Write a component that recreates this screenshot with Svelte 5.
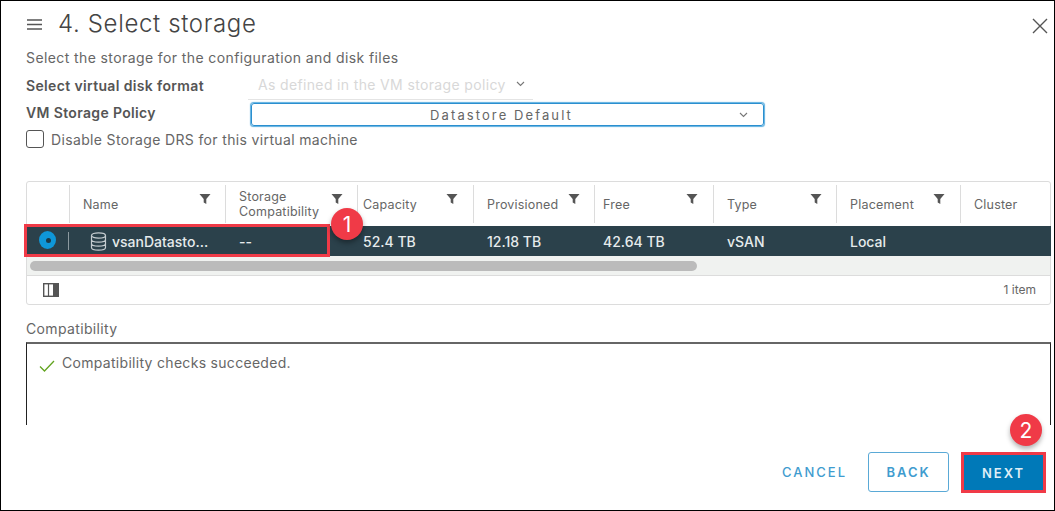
<script>
  // Column definitions for the datastore grid
  const columns = [
    { label: 'Name', width: 156, filter: true, fx: 129 },
    { label: 'Storage Compatibility', width: 132, filter: true, fx: 105 },
    { label: 'Capacity', width: 116, filter: true, fx: 88 },
    { label: 'Provisioned', width: 121, filter: true, fx: 94 },
    { label: 'Free', width: 119, filter: true, fx: 91 },
    { label: 'Type', width: 123, filter: true, fx: 96 },
    { label: 'Placement', width: 124, filter: true, fx: 96 },
    { label: 'Cluster', width: 90, filter: false, fx: 0 }
  ];
  const row = ['', '--', '52.4 TB', '12.18 TB', '42.64 TB', 'vSAN', 'Local', ''];
</script>

<div class="dialog">
  <header class="head">
    <svg class="menu" width="15" height="11" viewBox="0 0 15 11"><path d="M0 1h15M0 5.500h15M0 10h15" stroke="#555" stroke-width="1.500" /></svg>
    <h1>4. Select storage</h1>
    <svg class="close" width="16" height="16" viewBox="0 0 16 16"><path d="M1 1l14 14M15 1L1 15" stroke="#555" stroke-width="1.400" fill="none" /></svg>
  </header>

  <p class="intro">Select the storage for the configuration and disk files</p>

  <div class="field first">
    <span class="label">Select virtual disk format</span>
    <span class="format">
      As defined in the VM storage policy
      <svg width="9" height="6" viewBox="0 0 9 6"><path d="M1 1l3.500 3.500L8 1" stroke="#777" stroke-width="1.100" fill="none" /></svg>
    </span>
  </div>
  <div class="field second">
    <span class="label">VM Storage Policy</span>
    <div class="select">
      <span>Datastore Default</span>
      <svg width="9" height="6" viewBox="0 0 9 6"><path d="M1 1l3.500 3.500L8 1" stroke="#777" stroke-width="1.100" fill="none" /></svg>
    </div>
  </div>
  <label class="check"><span class="box"></span>Disable Storage DRS for this virtual machine</label>

  <div class="grid">
    <div class="grid-head">
      <div class="radio-col"></div>
      {#each columns as col}
        <div class="th" style="width: {col.width}px">
          <span class="th-label">{col.label}</span>
          {#if col.filter}
            <svg class="filter" style="left: {col.fx}px" width="12" height="12" viewBox="0 0 12 12"><path d="M0.500 1h11L7.300 6v5L4.700 9.500V6z" fill="#555" /></svg>
          {/if}
        </div>
      {/each}
    </div>

    <div class="grid-row">
      <div class="radio-col cell-radio"><span class="radio"></span><span class="sep"></span></div>
      <div class="td name" style="width: {columns[0].width}px">
        <svg width="17" height="19" viewBox="0 0 17 19" fill="none" stroke="#c5ccd0" stroke-width="1.200">
          <ellipse cx="8.500" cy="3.500" rx="7" ry="2.600" />
          <path d="M1.500 3.500v12c0 1.500 3.200 2.600 7 2.600s7-1.100 7-2.600v-12M1.500 7.500c0 1.500 3.200 2.600 7 2.600s7-1.100 7-2.600M1.500 11.500c0 1.500 3.200 2.600 7 2.600s7-1.100 7-2.600" />
        </svg>
        <span>vsanDatasto...</span>
      </div>
      {#each row.slice(1) as value, i}
        <div class="td" style="width: {columns[i + 1].width}px">{value}</div>
      {/each}
    </div>

    <div class="scroll"><div class="thumb"></div></div>

    <div class="grid-foot">
      <svg width="16" height="14" viewBox="0 0 16 14"><rect x="0.700" y="0.700" width="14.600" height="12.600" fill="#fff" stroke="#555" stroke-width="1.400" /><path d="M5.500 1v12" stroke="#555" stroke-width="1.200" /><rect x="10" y="1" width="5" height="12" fill="#555" /></svg>
      <span>1 item</span>
    </div>

    <!-- Callout 1 -->
    <div class="mark mark-row"></div>
    <div class="badge badge-one">1</div>
  </div>

  <div class="compat-label">Compatibility</div>
  <div class="compat">
    <svg width="16" height="12" viewBox="0 0 16 12"><path d="M1 6.500l4.500 4.500L15 1" stroke="#62a420" stroke-width="1.300" fill="none" /></svg>
    <span>Compatibility checks succeeded.</span>
  </div>

  <footer class="foot">
    <button class="btn link">CANCEL</button>
    <button class="btn outline">BACK</button>
    <button class="btn primary">NEXT</button>
    <!-- Callout 2 -->
    <div class="badge badge-two">2</div>
  </footer>
</div>

<style>
  :global(body) {
    margin: 0;
    background: #fff;
  }

  .dialog {
    width: 1055px;
    height: 511px;
    box-sizing: border-box;
    border: 1px solid #000;
    padding: 0 3px 0 25px;
    font-family: "Inter", "Open Sans", sans-serif;
    color: #565656;
    overflow: hidden;
    position: relative;
  }

  .head {
    display: flex;
    align-items: center;
    height: 47px;
  }

  .menu {
    margin: 0 16px 0 1px;
  }

  h1 {
    margin: 0 0 2px;
    font-size: 24px;
    font-weight: 300;
    letter-spacing: 0.650px;
    color: #444;
    flex: 1;
  }

  .close {
    margin: 2px 3px 0 0;
  }

  .intro {
    margin: 1px 0 0;
    font-size: 14px;
    letter-spacing: 0.400px;
    line-height: 18px;
    color: #666;
  }

  .field {
    display: flex;
    align-items: center;
    font-size: 14px;
    letter-spacing: 0.350px;
  }

  .first {
    height: 27px;
    margin-top: 6px;
  }

  .second {
    height: 26px;
  }

  .label {
    width: 225px;
    font-weight: 600;
    color: #555;
  }

  .first .label {
    padding-bottom: 3px;
  }

  .second .label {
    padding-bottom: 2px;
  }

  .format {
    width: 285px;
    margin-left: -3px;
    padding: 0 0 4px 10px;
    box-sizing: border-box;
    border-bottom: 1px solid #e4e4e4;
    color: #d8d8d8;
    display: flex;
    align-items: center;
    gap: 10px;
    white-space: nowrap;
    height: 27px;
  }

  .select {
    width: 513px;
    height: 23px;
    margin-top: 3px;
    box-sizing: border-box;
    border: 1px solid #2b8fcf;
    box-shadow: 0 0 1px 0.500px #5cb0e0;
    border-radius: 3px;
    display: flex;
    align-items: center;
    font-size: 13px;
    letter-spacing: 2.100px;
    color: #666;
  }

  .select span {
    flex: 1;
    text-align: center;
    padding-left: 12px;
  }

  .select svg {
    margin-right: 15px;
  }

  .check {
    display: flex;
    align-items: center;
    gap: 7px;
    height: 26px;
    font-size: 14px;
    letter-spacing: 0.350px;
    color: #666;
  }

  .box {
    width: 16px;
    height: 16px;
    border: 1px solid #555;
    border-radius: 3px;
  }

  .grid {
    position: relative;
    margin-top: 29px;
    width: 1025px;
    height: 124px;
    box-sizing: border-box;
    border: 1px solid #dcdcdc;
    border-radius: 3px;
  }

  .grid-head {
    display: flex;
    height: 44px;
    font-size: 12.500px;
    letter-spacing: 0.200px;
    color: #666;
  }

  .radio-col {
    width: 42px;
    flex: none;
  }

  .th {
    position: relative;
    flex: none;
    box-sizing: border-box;
    border-left: 1px solid #dcdcdc;
    margin: 3px 0;
    padding-left: 13px;
    display: flex;
    align-items: center;
    line-height: 15px;
  }

  .th:nth-child(3) {
    padding-left: 13px;
    padding-right: 26px;
  }

  .th:nth-child(4) {
    padding-left: 5px;
  }

  .th:nth-child(5) {
    padding-left: 13px;
  }

  .th:nth-child(6) {
    padding-left: 8px;
  }

  .filter {
    position: absolute;
    top: 8px;
  }

  .grid-row {
    display: flex;
    align-items: center;
    height: 30px;
    background: #2b414b;
    color: #e6ebec;
    font-size: 14px;
    font-weight: 500;
    margin-right: -1px;
  }

  .cell-radio {
    display: flex;
    align-items: center;
    height: 100%;
    position: relative;
  }

  .radio {
    width: 18px;
    height: 18px;
    box-sizing: border-box;
    border-radius: 50%;
    background: #0f97d8;
    margin: -2px 0 0 12px;
    position: relative;
  }

  .radio::after {
    content: "";
    position: absolute;
    left: 6.500px;
    top: 6.500px;
    width: 5px;
    height: 5px;
    border-radius: 50%;
    background: #1c3a48;
  }

  .sep {
    width: 1px;
    height: 18px;
    background: #8c9aa0;
    margin-left: 12px;
  }

  .td {
    flex: none;
    box-sizing: border-box;
    padding-left: 6px;
    white-space: nowrap;
  }

  .td.name {
    display: flex;
    align-items: center;
    gap: 5px;
    padding-left: 21px;
  }

  .td:nth-child(3) {
    padding-left: 14px;
  }

  .td:nth-child(5) {
    padding-left: 14px;
  }

  .td:nth-child(6) {
    padding-left: 9px;
  }

  .td:nth-child(7),
  .td:nth-child(8) {
    padding-left: 14px;
  }

  .scroll {
    height: 20px;
    background: #f0f2f0;
    border-bottom: 1px solid #dcdcdc;
    box-sizing: border-box;
    padding: 5px 0 0 3px;
  }

  .thumb {
    width: 667px;
    height: 10px;
    border-radius: 5px;
    background: #bbb;
  }

  .grid-foot {
    display: flex;
    align-items: center;
    justify-content: space-between;
    height: 27px;
    padding: 0 14px 0 16px;
    font-size: 12px;
    color: #666;
  }

  .mark {
    position: absolute;
    border: 3px solid #f03a47;
    box-sizing: border-box;
  }

  .mark-row {
    left: -3px;
    top: 42px;
    width: 306px;
    height: 33px;
  }

  .badge {
    position: absolute;
    width: 32px;
    height: 32px;
    border-radius: 50%;
    background: #f03a47;
    color: #fff;
    font-size: 21px;
    display: flex;
    align-items: center;
    justify-content: center;
    box-shadow: 0 3px 5px rgba(0, 0, 0, 0.35);
  }

  .badge-one {
    left: 304px;
    top: 26px;
  }

  .compat-label {
    margin-top: 15px;
    font-size: 14px;
    letter-spacing: 0.350px;
    line-height: 18px;
    color: #666;
  }

  .compat {
    width: 1025px;
    height: 83px;
    margin-top: 4px;
    box-sizing: border-box;
    border-top: 2px solid #666;
    border-left: 1px solid #222;
    border-right: 1px solid #222;
    padding: 10px 0 0 12px;
    display: flex;
    align-items: flex-start;
    gap: 7px;
    font-size: 14px;
    letter-spacing: 0.300px;
    line-height: 18px;
    color: #666;
  }

  .compat svg {
    margin-top: 6px;
  }

  .foot {
    position: relative;
    display: flex;
    justify-content: flex-end;
    align-items: flex-start;
    height: 41px;
    margin-top: 27px;
    padding-right: 5px;
  }

  .btn {
    height: 40px;
    box-sizing: border-box;
    font-family: inherit;
    font-size: 13px;
    font-weight: 600;
    letter-spacing: 2px;
    background: none;
    border: none;
    padding: 0;
  }

  .link {
    color: #3f9ccf;
    margin-right: 21px;
    font-weight: 500;
  }

  .outline {
    width: 81px;
    border: 1px solid #5aa9d6;
    border-radius: 3px;
    color: #3f9ccf;
    margin-right: 12px;
  }

  .primary {
    width: 85px;
    height: 41px;
    background: #0079b8;
    border: 3px solid #f03a47;
    color: #dfeef6;
  }

  .badge-two {
    right: 9px;
    top: -38px;
    box-shadow: 0 3px 5px rgba(0, 0, 0, 0.3);
  }
</style>
